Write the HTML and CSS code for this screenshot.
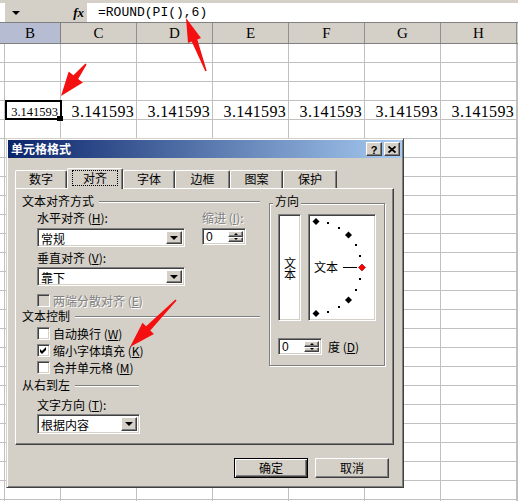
FILE: index.html
```html
<!DOCTYPE html>
<html lang="zh-CN">
<head>
<meta charset="utf-8">
<title>单元格格式</title>
<link rel="stylesheet" href="styles.css">
</head>
<body>
<div class="fbar">
  <div class="namebox"></div>
  <div class="nbtn"><span class="tri-down"></span></div>
  <div class="fx">fx</div>
  <div class="formula">=ROUND(PI(),6)</div>
</div>
<div class="colhdr">
  <div class="ch sel">B</div><div class="ch">C</div><div class="ch">D</div><div class="ch">E</div><div class="ch">F</div><div class="ch">G</div><div class="ch">H</div><div class="ch last"></div>
</div>
<div class="sheet">
  <div class="row"><i></i><i></i><i></i><i></i><i></i><i></i><i></i><i></i><i></i></div>
  <div class="row"><i></i><i></i><i></i><i></i><i></i><i></i><i></i><i></i><i></i></div>
  <div class="row"><i></i><i></i><i></i><i></i><i></i><i></i><i></i><i></i><i></i></div>
  <div class="row"><i></i><i class="act"><span class="small">3.141593</span><span class="selbox"></span><span class="handle"></span></i><i class="v">3.141593</i><i class="v">3.141593</i><i class="v">3.141593</i><i class="v">3.141593</i><i class="v">3.141593</i><i class="v">3.141593</i><i></i></div>
  <div class="row"><i></i><i></i><i></i><i></i><i></i><i></i><i></i><i></i><i></i></div>
  <div class="row"><i></i><i></i><i></i><i></i><i></i><i></i><i></i><i></i><i></i></div>
  <div class="row"><i></i><i></i><i></i><i></i><i></i><i></i><i></i><i></i><i></i></div>
  <div class="row"><i></i><i></i><i></i><i></i><i></i><i></i><i></i><i></i><i></i></div>
  <div class="row"><i></i><i></i><i></i><i></i><i></i><i></i><i></i><i></i><i></i></div>
  <div class="row"><i></i><i></i><i></i><i></i><i></i><i></i><i></i><i></i><i></i></div>
  <div class="row"><i></i><i></i><i></i><i></i><i></i><i></i><i></i><i></i><i></i></div>
  <div class="row"><i></i><i></i><i></i><i></i><i></i><i></i><i></i><i></i><i></i></div>
  <div class="row"><i></i><i></i><i></i><i></i><i></i><i></i><i></i><i></i><i></i></div>
  <div class="row"><i></i><i></i><i></i><i></i><i></i><i></i><i></i><i></i><i></i></div>
  <div class="row"><i></i><i></i><i></i><i></i><i></i><i></i><i></i><i></i><i></i></div>
  <div class="row"><i></i><i></i><i></i><i></i><i></i><i></i><i></i><i></i><i></i></div>
  <div class="row"><i></i><i></i><i></i><i></i><i></i><i></i><i></i><i></i><i></i></div>
  <div class="row"><i></i><i></i><i></i><i></i><i></i><i></i><i></i><i></i><i></i></div>
  <div class="row"><i></i><i></i><i></i><i></i><i></i><i></i><i></i><i></i><i></i></div>
  <div class="row"><i></i><i></i><i></i><i></i><i></i><i></i><i></i><i></i><i></i></div>
  <div class="row"><i></i><i></i><i></i><i></i><i></i><i></i><i></i><i></i><i></i></div>
  <div class="row"><i></i><i></i><i></i><i></i><i></i><i></i><i></i><i></i><i></i></div>
  <div class="row"><i></i><i></i><i></i><i></i><i></i><i></i><i></i><i></i><i></i></div>
  <div class="row"><i></i><i></i><i></i><i></i><i></i><i></i><i></i><i></i><i></i></div>
  <div class="row"><i></i><i></i><i></i><i></i><i></i><i></i><i></i><i></i><i></i></div>
</div>

<div class="dialog">
  <div class="titlebar">
    <span class="title">单元格格式</span>
    <div class="tbtns">
      <span class="tbtn q">?</span>
      <span class="tbtn"><svg width="8" height="7" viewBox="0 0 8 7"><path d="M0.5 0.5 L7.5 6.5 M7.5 0.5 L0.5 6.5" stroke="#000" stroke-width="1.8" fill="none"/></svg></span>
    </div>
  </div>
  <div class="tabs">
    <div class="tab">数字</div>
    <div class="tab on"><span class="focus">对齐</span></div>
    <div class="tab">字体</div>
    <div class="tab">边框</div>
    <div class="tab">图案</div>
    <div class="tab">保护</div>
  </div>
  <div class="panel">
    <div class="left">
      <div class="gtitle">文本对齐方式</div>
      <div class="lrow"><span class="lbl1">水平对齐 (<u>H</u>):</span><span class="dis">缩进 (<u>I</u>):</span></div>
      <div class="ctrls">
        <div class="dd"><span>常规</span><span class="ddbtn"><span class="tri-down"></span></span></div>
        <div class="spin sp-ind"><span>0</span><span class="spinbtns"><i><span class="tup"></span></i><i><span class="tdn"></span></i></span></div>
      </div>
      <div class="lrow l2">垂直对齐 (<u>V</u>):</div>
      <div class="ctrls c2">
        <div class="dd"><span>靠下</span><span class="ddbtn"><span class="tri-down"></span></span></div>
      </div>
      <div class="cb c-dis"><span class="box off"></span><span class="dis">两端分散对齐 (<u>E</u>)</span></div>
      <div class="gtitle g2">文本控制</div>
      <div class="cb c1"><span class="box"></span><span>自动换行 (<u>W</u>)</span></div>
      <div class="cb c1"><span class="box"><svg width="7" height="7" viewBox="0 0 7 7"><polygon points="0,2 2,4 6,0 6,3 2,7 0,5" fill="#000"/></svg></span><span>缩小字体填充 (<u>K</u>)</span></div>
      <div class="cb c1"><span class="box"></span><span>合并单元格 (<u>M</u>)</span></div>
      <div class="gtitle g3 short">从右到左</div>
      <div class="lrow l3">文字方向 (<u>T</u>):</div>
      <div class="ctrls c2">
        <div class="dd dd3"><span>根据内容</span><span class="ddbtn"><span class="tri-down"></span></span></div>
      </div>
    </div>
    <div class="gbox">
      <span class="legend">方向</span>
      <div class="orient">
        <div class="vbox"><span class="vtext">文本</span></div>
        <div class="dial">
          <svg width="64" height="103" viewBox="0 0 64 103">
            <g fill="#000">
              <polygon points="6,2 9.5,5.5 6,9 2.5,5.5"/>
              <polygon points="38.5,15.5 42,19 38.5,22.5 35,19"/>
              <polygon points="38.5,80.5 42,84 38.5,87.5 35,84"/>
              <polygon points="6,94 9.5,97.5 6,101 2.5,97.5"/>
              <rect x="17" y="6" width="2" height="2"/>
              <rect x="28" y="11" width="2" height="2"/>
              <rect x="45" y="28" width="2" height="2"/>
              <rect x="49" y="39" width="2" height="2"/>
              <rect x="49" y="62" width="2" height="2"/>
              <rect x="45" y="73" width="2" height="2"/>
              <rect x="28" y="90" width="2" height="2"/>
              <rect x="17" y="95" width="2" height="2"/>
              <rect x="33" y="51" width="14" height="1"/>
            </g>
            <polygon points="52,48 55.5,51.5 52,55 48.5,51.5" fill="#ff0000" stroke="#800000" stroke-width="0.6"/>
            <text x="4" y="56" font-size="12" font-family="Noto Sans CJK SC, sans-serif" fill="#000">文本</text>
          </svg>
        </div>
      </div>
      <div class="degrow">
        <div class="spin"><span>0</span><span class="spinbtns"><i><span class="tup"></span></i><i><span class="tdn"></span></i></span></div>
        <span>度 (<u>D</u>)</span>
      </div>
    </div>
  </div>
  <div class="btns">
    <div class="btn def">确定</div>
    <div class="btn">取消</div>
  </div>
</div>

<svg class="arrows" width="518" height="501" viewBox="0 0 518 501">
  <g fill="#f41010">
    <polygon points="186,18 201,38 197.3,39.4 206.7,70.7 205.3,71.3 191.7,41.6 188,43"/>
    <polygon points="61,96 82.9,82.6 78.2,79 86.6,64.5 85.4,63.5 73.4,75.3 68.7,71.6"/>
    <polygon points="130,347 153.9,334 150.3,330.5 176.6,300.6 175.4,299.4 146.1,326.3 142.5,322.8"/>
  </g>
</svg>
</body>
</html>
```

FILE: styles.css
```css
* { box-sizing: border-box; margin: 0; padding: 0; }
html, body { width: 518px; height: 501px; overflow: hidden; background: #fff; }
body {
  position: relative;
  font-family: "Noto Sans CJK SC", "Noto Sans", sans-serif;
  font-size: 12px;
  color: #000;
}
u { text-decoration: underline; text-underline-offset: 1px; }

/* formula bar */
.fbar {
  display: flex;
  height: 23px;
  padding-top: 3px;
  background: #d4d0c8;
  border-bottom: 1px solid #808080;
}
.namebox { width: 5px; background: #fff; }
.nbtn { width: 22px; display: flex; align-items: center; justify-content: center; }
.tri-down {
  width: 0; height: 0;
  border-left: 4px solid transparent;
  border-right: 4px solid transparent;
  border-top: 4px solid #000;
}
.fx {
  width: 60px;
  text-align: right;
  padding-right: 3px;
  font: italic bold 13px/19px "Liberation Serif", serif;
}
.formula {
  flex: 1;
  background: #fff;
  padding-left: 11px;
  font: 13px/19px "Liberation Mono", monospace;
}

/* column headers */
.colhdr {
  display: grid;
  grid-template-columns: 61px repeat(6, 76px) 1fr;
  height: 21px;
  background: #d4d0c8;
  border-bottom: 1px solid #808080;
}
.ch {
  border-right: 1px solid #909090;
  text-align: center;
  font: 15px/20px "Liberation Serif", serif;
}
.ch.sel { background: #b6bdd2; border-right-color: #808080; }
.ch.last { border-right: 0; }

/* sheet */
.sheet { display: flex; flex-direction: column; }
.row {
  display: grid;
  grid-template-columns: 5px 56px repeat(6, 76px) 1fr;
  height: 19px;
  border-bottom: 1px solid #c0c0c0;
}
.row > i { border-right: 1px solid #c0c0c0; font-style: normal; }
.v {
  text-align: right;
  padding: 4px 2px 0 0;
  font: 16px/14px "Liberation Serif", serif;
  letter-spacing: 0.3px;
}
.act { position: relative; }
.act .small {
  display: block;
  text-align: right;
  padding: 5px 2px 0 0;
  font: 12.5px/12px "Liberation Serif", serif;
}
.selbox {
  position: absolute;
  top: -1px; left: 0; right: -2px; bottom: -1px;
  border: 2px solid #000;
}
.handle {
  position: absolute;
  right: -3px; bottom: -2px;
  width: 6px; height: 5px;
  background: #000;
}

/* dialog */
.dialog {
  position: absolute;
  left: 6px; top: 138px;
  width: 398px; height: 350px;
  background: #d4d0c8;
  border: 1px solid;
  border-color: #d4d0c8 #404040 #404040 #d4d0c8;
  box-shadow: inset 1px 1px #fff, inset -1px -1px #808080;
  padding: 1px;
  z-index: 5;
}
.titlebar {
  height: 18px;
  display: flex;
  align-items: center;
  justify-content: space-between;
  background: linear-gradient(to right, #0a246a, #a6caf0);
  padding: 0 2px 0 3px;
}
.title { color: #fff; font-weight: bold; line-height: 18px; }
.tbtns { display: flex; gap: 2px; }
.tbtn {
  width: 16px; height: 14px;
  background: #d4d0c8;
  border: 1px solid;
  border-color: #fff #404040 #404040 #fff;
  box-shadow: inset -1px -1px #808080;
  display: flex; align-items: center; justify-content: center;
}
.tbtn.q { font: bold 11px/12px "Liberation Sans", sans-serif; padding-top: 1px; }

.tabs {
  display: flex;
  align-items: flex-end;
  height: 20px;
  margin: 10px 0 0 7px;
  position: relative;
  z-index: 2;
}
.tab {
  height: 18px;
  width: 52px;
  background: #d4d0c8;
  border: 1px solid;
  border-bottom: 0;
  border-color: #fff #404040 #404040 #fff;
  box-shadow: inset -1px 0 #808080;
  border-radius: 2px 2px 0 0;
  text-align: center;
  line-height: 16px;
}
.tab:nth-child(2) { width: 56px; }
.tab:nth-child(4) { width: 55px; }
.tab:nth-child(5) { width: 53px; }
.tab:nth-child(6) { width: 54px; }
.tab.on { height: 21px; margin-bottom: -1px; padding-top: 1px; }
.focus {
  display: inline-block;
  border: 1px dotted #000;
  padding: 0 10px;
  line-height: 14px;
}

.panel {
  height: 257px;
  margin: 0 8px 0 7px;
  border: 1px solid;
  border-color: #fff #404040 #404040 #fff;
  box-shadow: inset -1px -1px #808080;
  display: flex;
  align-items: flex-start;
  gap: 9px;
  padding: 5px 0 0 6px;
  position: relative;
  z-index: 1;
}
.left { width: 238px; }
.gtitle {
  display: flex;
  align-items: center;
  height: 14px;
  line-height: 14px;
}
.gtitle::after {
  content: "";
  flex: 1;
  margin-left: 5px;
  margin-top: 2px;
  border-top: 1px solid #808080;
  border-bottom: 1px solid #fff;
}
.gtitle.g2 { margin-top: 2px; }
.gtitle.g3 { margin-top: 4px; }
.gtitle.short { width: 117px; }

.lrow {
  display: flex;
  height: 14px;
  line-height: 14px;
  margin-top: 3px;
  padding-left: 15px;
}
.lbl1 { width: 165px; }
.lrow.l2 { margin-top: 4px; }
.lrow.l3 { margin-top: 6px; }
.dis { color: #808080; text-shadow: 1px 1px 0 #fff; }

.ctrls {
  display: flex;
  align-items: flex-start;
  gap: 17px;
  margin-top: 3px;
  padding-left: 15px;
}
.ctrls.c2 { margin-top: 2px; }

.dd {
  display: flex;
  width: 148px;
  height: 19px;
  padding: 2px;
  background: #fff;
  border: 1px solid;
  border-color: #808080 #fff #fff #808080;
  box-shadow: inset 1px 1px #404040, inset -1px -1px #d4d0c8;
}
.dd > span:first-child { flex: 1; line-height: 15px; padding-left: 1px; }
.dd.dd3 { width: 103px; height: 20px; }
.dd.dd3 > span:first-child { line-height: 16px; }
.ddbtn, .spinbtns i {
  background: #d4d0c8;
  border: 1px solid;
  border-color: #fff #404040 #404040 #fff;
  box-shadow: inset -1px -1px #808080;
}
.ddbtn {
  width: 16px;
  display: flex; align-items: center; justify-content: center;
}

.spin {
  display: flex;
  width: 44px; height: 17px;
  padding: 2px;
  background: #fff;
  border: 1px solid;
  border-color: #808080 #fff #fff #808080;
  box-shadow: inset 1px 1px #404040, inset -1px -1px #d4d0c8;
}
.spin > span:first-child { flex: 1; line-height: 13px; padding-left: 1px; font-family: "Liberation Sans", sans-serif; }
.spinbtns { width: 15px; display: flex; flex-direction: column; }
.spinbtns i { display: flex; align-items: center; justify-content: center; height: 7px; }
.spinbtns i + i { height: 6px; }
.tup, .tdn {
  width: 1px; height: 0;
  border-left: 2px solid transparent;
  border-right: 2px solid transparent;
}
.tup { border-bottom: 2px solid #000; }
.tdn { border-top: 2px solid #000; }

.cb {
  display: flex;
  align-items: center;
  height: 13px;
  line-height: 13px;
  padding-left: 15px;
  margin-top: 3px;
}
.cb.c-dis { margin-top: 8px; }
.cb.c1 { margin-top: 4px; }
.box {
  width: 13px; height: 13px;
  margin-right: 3px;
  background: #fff;
  border: 1px solid;
  border-color: #808080 #fff #fff #808080;
  box-shadow: inset 1px 1px #404040, inset -1px -1px #d4d0c8;
  display: flex; align-items: center; justify-content: center;
}
.box.off { background: #d4d0c8; }

/* orientation group */
.gbox {
  position: relative;
  width: 116px; height: 163px;
  margin-top: 9px;
  border: 1px solid #808080;
  box-shadow: inset 1px 1px #fff, 1px 1px #fff;
  padding: 10px 0 0 8px;
}
.legend {
  position: absolute;
  top: -10px; left: 3px;
  padding: 0 2px;
  line-height: 14px;
  background: #d4d0c8;
}
.orient { display: flex; gap: 7px; }
.vbox, .dial {
  height: 107px;
  background: #fff;
  border: 1px solid;
  border-color: #808080 #fff #fff #808080;
  box-shadow: inset 1px 1px #404040, inset -1px -1px #d4d0c8;
}
.vbox {
  width: 23px;
  display: flex; align-items: center; justify-content: center;
}
.vtext {
  writing-mode: vertical-rl;
  text-orientation: upright;
  line-height: 12px;
  letter-spacing: -1px;
}
.dial { width: 68px; padding: 1px; }
.dial svg { display: block; }
.degrow { display: flex; align-items: center; gap: 6px; margin-top: 17px; }

/* buttons */
.btns {
  display: flex;
  justify-content: flex-end;
  gap: 7px;
  margin-top: 13px;
  padding-right: 13px;
}
.btn {
  width: 74px; height: 20px;
  text-align: center;
  line-height: 18px;
  background: #d4d0c8;
  border: 1px solid;
  border-color: #fff #404040 #404040 #fff;
  box-shadow: inset -1px -1px #808080;
}
.btn.def {
  border-color: #000;
  box-shadow: inset 1px 1px #fff, inset -1px -1px #404040, inset -2px -2px #808080;
}

.arrows {
  position: absolute;
  left: 0; top: 0;
  z-index: 10;
  pointer-events: none;
}
```
